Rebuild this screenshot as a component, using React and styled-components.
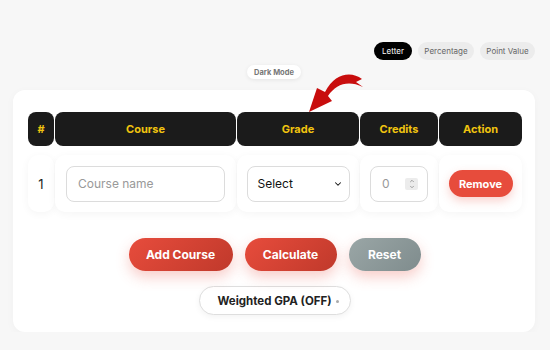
import styled, { createGlobalStyle } from "styled-components";
import { ChevronDown, ChevronUp } from "lucide-react";

const GlobalStyle = createGlobalStyle`
  body {
    margin: 0;
    background: #f7f7f7;
    font-family: Inter, "Noto Sans", Arial, sans-serif;
  }
`;

const Page = styled.div`
  position: relative;
  padding: 42px 15px 0 13px;
  width: 522px;
`;

const ModeRow = styled.div`
  display: flex;
  justify-content: flex-end;
  gap: 6px;
`;

const ModeButton = styled.button`
  height: 18px;
  width: ${(p) => p.$w}px;
  padding: 0;
  border: none;
  border-radius: 9px;
  font-family: inherit;
  font-size: 8px;
  background: ${(p) => (p.$active ? "#000" : "#ececec")};
  color: ${(p) => (p.$active ? "#fff" : "#666")};
`;

const DarkToggle = styled.button`
  display: block;
  margin: 5px auto 0;
  height: 14px;
  padding: 0 7px;
  border: none;
  border-radius: 7px;
  background: #fff;
  box-shadow: 0 1px 4px rgba(0, 0, 0, 0.08);
  font-family: inherit;
  font-size: 7.5px;
  font-weight: 700;
  color: #777;
`;

const Card = styled.div`
  margin-top: 11px;
  background: #fff;
  border-radius: 12px;
  padding: 22px 14px 17px 15px;
  box-shadow: 0 2px 10px rgba(0, 0, 0, 0.03);
`;

const Grid = styled.div`
  display: grid;
  grid-template-columns: 26px 181px 122px 78px 83px;
  column-gap: 1px;
  row-gap: 9px;
`;

const HeadCell = styled.div`
  height: 34px;
  display: flex;
  align-items: center;
  justify-content: center;
  background: #1b1b1b;
  border-radius: 8px;
  color: #f1c40f;
  font-size: 11px;
  font-weight: 700;
`;

const BodyCell = styled.div`
  height: 57px;
  display: flex;
  align-items: center;
  justify-content: center;
  background: #fff;
  border-radius: 10px;
  box-shadow: 0 2px 8px rgba(0, 0, 0, 0.045);
  font-size: 13px;
  color: #222;
`;

const TextInput = styled.input`
  box-sizing: border-box;
  width: 159px;
  height: 36px;
  padding: 0 11px;
  border: 1px solid #dcdcdc;
  border-radius: 8px;
  font-family: inherit;
  font-size: 12px;
  outline: none;
  &::placeholder {
    color: #999;
  }
`;

const SelectBox = styled.div`
  box-sizing: border-box;
  width: 103px;
  height: 36px;
  padding: 0 6px 0 10px;
  display: flex;
  align-items: center;
  justify-content: space-between;
  border: 1px solid #dcdcdc;
  border-radius: 8px;
  font-size: 12px;
  color: #111;
`;

const NumberBox = styled.div`
  box-sizing: border-box;
  width: 58px;
  height: 36px;
  padding: 0 9px 0 11px;
  display: flex;
  align-items: center;
  justify-content: space-between;
  border: 1px solid #dcdcdc;
  border-radius: 8px;
  font-size: 12px;
  color: #999;
`;

const Spinner = styled.span`
  width: 13px;
  height: 12px;
  display: flex;
  flex-direction: column;
  align-items: center;
  justify-content: center;
  background: #ececec;
  border-radius: 2px;
  color: #888;
`;

const RemoveButton = styled.button`
  width: 64px;
  height: 27px;
  border: none;
  border-radius: 14px;
  background: #e74c3c;
  color: #fff;
  font-family: inherit;
  font-size: 11px;
  font-weight: 700;
  box-shadow: 0 4px 10px rgba(231, 76, 60, 0.25);
`;

const Actions = styled.div`
  margin-top: 26px;
  display: flex;
  justify-content: center;
  gap: 12px;
`;

const ActionButton = styled.button`
  width: ${(p) => p.$w}px;
  height: 33px;
  border: none;
  border-radius: 17px;
  background: ${(p) =>
    p.$gray
      ? "linear-gradient(135deg, #9aa6a6, #7f8c8d)"
      : "linear-gradient(135deg, #e74c3c, #c0392b)"};
  color: #fff;
  font-family: inherit;
  font-size: 12px;
  font-weight: 700;
  box-shadow: 0 6px 14px rgba(231, 76, 60, 0.28);
`;

const WeightedButton = styled.button`
  display: flex;
  align-items: center;
  gap: 4px;
  margin: 15px auto 0;
  height: 29px;
  padding: 0 0 0 18px;
  width: 152px;
  border: 1px solid #dedede;
  border-radius: 15px;
  background: #fff;
  box-shadow: 0 2px 6px rgba(0, 0, 0, 0.05);
  font-family: inherit;
  font-size: 11.5px;
  font-weight: 700;
  color: #222;
`;

const Dot = styled.span`
  width: 3px;
  height: 3px;
  border-radius: 50%;
  background: #aaa;
  margin-top: 2px;
`;

const Arrow = styled.svg`
  position: absolute;
  left: 305px;
  top: 70px;
`;

function CurvedArrow() {
  return (
    <Arrow width="60" height="45" viewBox="0 0 60 45">
      <path
        d="M57 9 C46 1, 30 3, 20 22 L12 18 L4 42 L27 31 L23 26 C31 14, 43 10, 58 17 L51 12 Z"
        fill="#c80d0d"
      />
    </Arrow>
  );
}

export default function App() {
  return (
    <>
      <GlobalStyle />
      <Page>
        <ModeRow>
          <ModeButton $active $w={38}>Letter</ModeButton>
          <ModeButton $w={56}>Percentage</ModeButton>
          <ModeButton $w={55}>Point Value</ModeButton>
        </ModeRow>
        <DarkToggle>Dark Mode</DarkToggle>
        <CurvedArrow />
        <Card>
          <Grid>
            <HeadCell>#</HeadCell>
            <HeadCell>Course</HeadCell>
            <HeadCell>Grade</HeadCell>
            <HeadCell>Credits</HeadCell>
            <HeadCell>Action</HeadCell>
            <BodyCell>1</BodyCell>
            <BodyCell>
              <TextInput placeholder="Course name" />
            </BodyCell>
            <BodyCell>
              <SelectBox>
                Select
                <ChevronDown size={10} strokeWidth={2.5} />
              </SelectBox>
            </BodyCell>
            <BodyCell>
              <NumberBox>
                0
                <Spinner>
                  <ChevronUp size={6} strokeWidth={3} />
                  <ChevronDown size={6} strokeWidth={3} />
                </Spinner>
              </NumberBox>
            </BodyCell>
            <BodyCell>
              <RemoveButton>Remove</RemoveButton>
            </BodyCell>
          </Grid>
          <Actions>
            <ActionButton $w={104}>Add Course</ActionButton>
            <ActionButton $w={92}>Calculate</ActionButton>
            <ActionButton $w={72} $gray>Reset</ActionButton>
          </Actions>
          <WeightedButton>
            Weighted GPA (OFF)
            <Dot />
          </WeightedButton>
        </Card>
      </Page>
    </>
  );
}
